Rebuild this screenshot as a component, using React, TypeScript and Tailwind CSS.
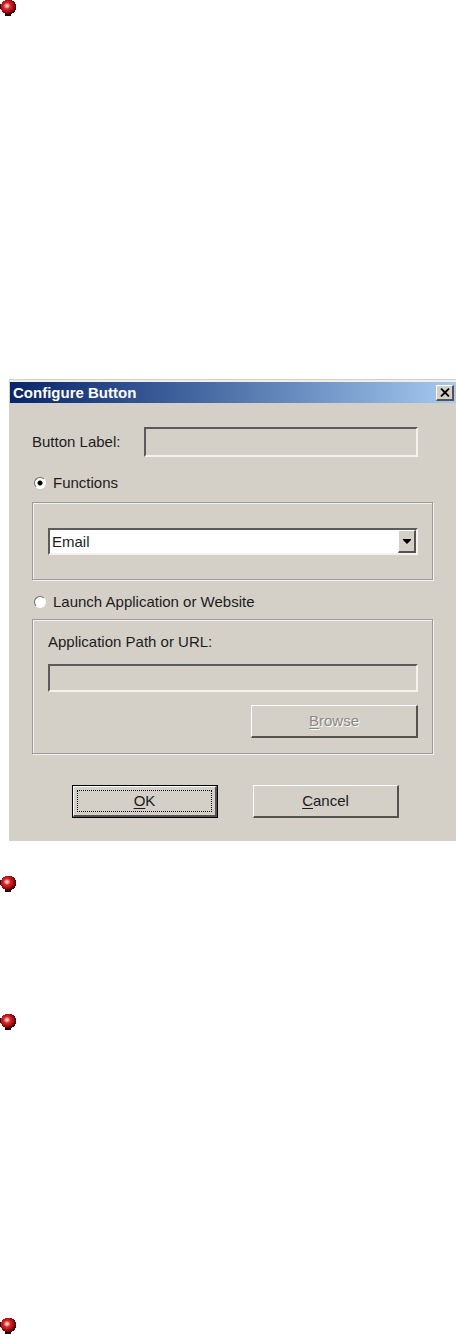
import { useState } from "react";
import type { ReactNode } from "react";

//
// ==========================================================
// SHARED CLASSES
// ==========================================================
const sunken =
  "border-2 border-t-[#5c5a5b] border-l-[#5c5a5b] border-r-[#f4f2ee] border-b-[#f4f2ee] rounded-none outline-none";

const raised =
  "border-t border-l border-r-2 border-b-2 border-t-white border-l-white border-r-[#55534f] border-b-[#55534f]";

//
// ==========================================================
// PAGE COMPONENT
// ==========================================================
export default function App() {
  return (
    <ul className="list-none bg-white font-['Liberation_Sans',Arial,sans-serif] text-[15px] leading-5 text-[#1c1c1c]">
      <BulletItem>
        <div className="pt-[363px] pb-[35px] pl-[9px]">
          <ConfigureDialog />
        </div>
      </BulletItem>
      <BulletItem>
        <div className="h-[122px]" />
      </BulletItem>
      <BulletItem>
        <div className="h-72" />
      </BulletItem>
      <BulletItem />
    </ul>
  );
}

function ConfigureDialog() {
  const [mode, setMode] = useState("functions");

  return (
    <section
      aria-labelledby="dialog-title"
      className="border-t border-[#d4d0c8] bg-[#d4d0c8]"
    >
      {/* TITLE BAR */}
      <header className="ml-px flex h-[23px] items-center justify-between border-t-2 border-[#f0eeea] bg-linear-to-r from-[#0a246a] to-[#a6caf0] pr-0.5 pl-[3px]">
        <h1 id="dialog-title" className="font-bold text-white">
          Configure Button
        </h1>
        <button
          type="button"
          aria-label="Close"
          className={`flex h-4 w-[18px] items-center justify-center bg-[#d4d0c8] ${raised}`}
        >
          <svg width="10" height="9" viewBox="0 0 10 9" aria-hidden="true">
            <path d="M1 .5 9 8.5M9 .5 1 8.5" stroke="#000" strokeWidth="1.8" />
          </svg>
        </button>
      </header>

      <form
        className="pt-6 pr-[23px] pb-[23px] pl-[23px]"
        onSubmit={(e) => e.preventDefault()}
      >
        {/* LABEL */}
        <div className="flex h-[30px] items-center pr-[15px]">
          <label htmlFor="button-label" className="w-28 shrink-0">
            Button Label:
          </label>
          <input
            id="button-label"
            type="text"
            className={`h-full min-w-0 flex-1 px-1 ${sunken}`}
          />
        </div>

        {/* FUNCTIONS */}
        <Choice
          className="mt-4"
          label="Functions"
          checked={mode === "functions"}
          onChange={() => setMode("functions")}
        />
        <Group className="mt-[9px] pt-[25px] pb-6">
          <div className="relative">
            <select
              aria-label="Function"
              className={`block h-[27px] w-full appearance-none bg-white pl-0.5 ${sunken}`}
            >
              <option>Email</option>
            </select>
            <span
              className={`pointer-events-none absolute top-0.5 right-0.5 bottom-0.5 flex w-[18px] items-center justify-center bg-[#d4d0c8] ${raised}`}
            >
              <svg width="8" height="5" viewBox="0 0 8 5" aria-hidden="true">
                <path d="M0 0h8v1L4 5 0 1z" fill="#000" />
              </svg>
            </span>
          </div>
        </Group>

        {/* LAUNCH */}
        <Choice
          className="mt-3"
          label="Launch Application or Website"
          checked={mode === "launch"}
          onChange={() => setMode("launch")}
        />
        <Group className="mt-[7px] flex flex-col pt-3 pb-[15px]">
          <label htmlFor="app-path">Application Path or URL:</label>
          <input
            id="app-path"
            type="text"
            className={`mt-3 h-7 w-full px-1 ${sunken}`}
          />
          <button
            type="button"
            disabled
            className={`mt-[13px] h-[33px] w-[167px] self-end text-[#8b8985] [text-shadow:1px_1px_0_#fff] ${raised}`}
          >
            <u className="underline-offset-2">B</u>rowse
          </button>
        </Group>

        {/* ACTIONS */}
        <div className="mt-[31px] flex justify-center gap-[35px] pl-1.5">
          <button
            type="submit"
            className="h-[33px] w-[146px] border border-black"
          >
            <span className={`block h-full p-[3px] ${raised}`}>
              <span className="flex h-full items-center justify-center border border-dotted border-black">
                <u className="underline-offset-2">O</u>K
              </span>
            </span>
          </button>
          <button type="button" className={`h-[33px] w-[146px] ${raised}`}>
            <u className="underline-offset-2">C</u>ancel
          </button>
        </div>
      </form>
    </section>
  );
}

//
// ==========================================================
// REUSABLE COMPONENTS
// ==========================================================
function BulletItem({ children }: { children?: ReactNode }) {
  return (
    <li>
      <Ball />
      {children}
    </li>
  );
}

function Group({
  className,
  children,
}: {
  className: string;
  children: ReactNode;
}) {
  return (
    <div
      className={`border border-[#9c9a9a] pr-3.5 pl-[15px] shadow-[1px_1px_0_#f4f2ee,inset_1px_1px_0_#f4f2ee] ${className}`}
    >
      {children}
    </div>
  );
}

function Choice({
  className,
  label,
  checked,
  onChange,
}: {
  className: string;
  label: string;
  checked: boolean;
  onChange: () => void;
}) {
  return (
    <label className={`flex h-5 items-center gap-[7px] pl-0.5 ${className}`}>
      <input
        type="radio"
        name="mode"
        checked={checked}
        onChange={onChange}
        className="size-3 appearance-none rounded-full border border-t-[#6e6c68] border-r-white border-b-white border-l-[#6e6c68] bg-white checked:bg-[radial-gradient(circle,#000_2px,#fff_3px)]"
      />
      {label}
    </label>
  );
}

function Ball() {
  return (
    <svg
      width="16"
      height="16"
      viewBox="0 0 16 16"
      className="block"
      shapeRendering="crispEdges"
      aria-hidden="true"
    >
      <defs>
        <radialGradient id="ball" cx="0.4" cy="0.42" r="0.65">
          <stop offset="0" stopColor="#fff" />
          <stop offset="0.16" stopColor="#f7a5a2" />
          <stop offset="0.34" stopColor="#e0262a" />
          <stop offset="0.65" stopColor="#b00c10" />
          <stop offset="1" stopColor="#2c0002" />
        </radialGradient>
      </defs>
      <path d="M0 4h2v5H0zM5 13h6v3H5z" fill="#180404" />
      <path
        d="M5 0h7v1h2v1h1v2h1v6h-1v2h-1v1h-2v1H5v-1H3v-1H2v-2H1V4h1V2h1V1h2z"
        fill="url(#ball)"
      />
    </svg>
  );
}
